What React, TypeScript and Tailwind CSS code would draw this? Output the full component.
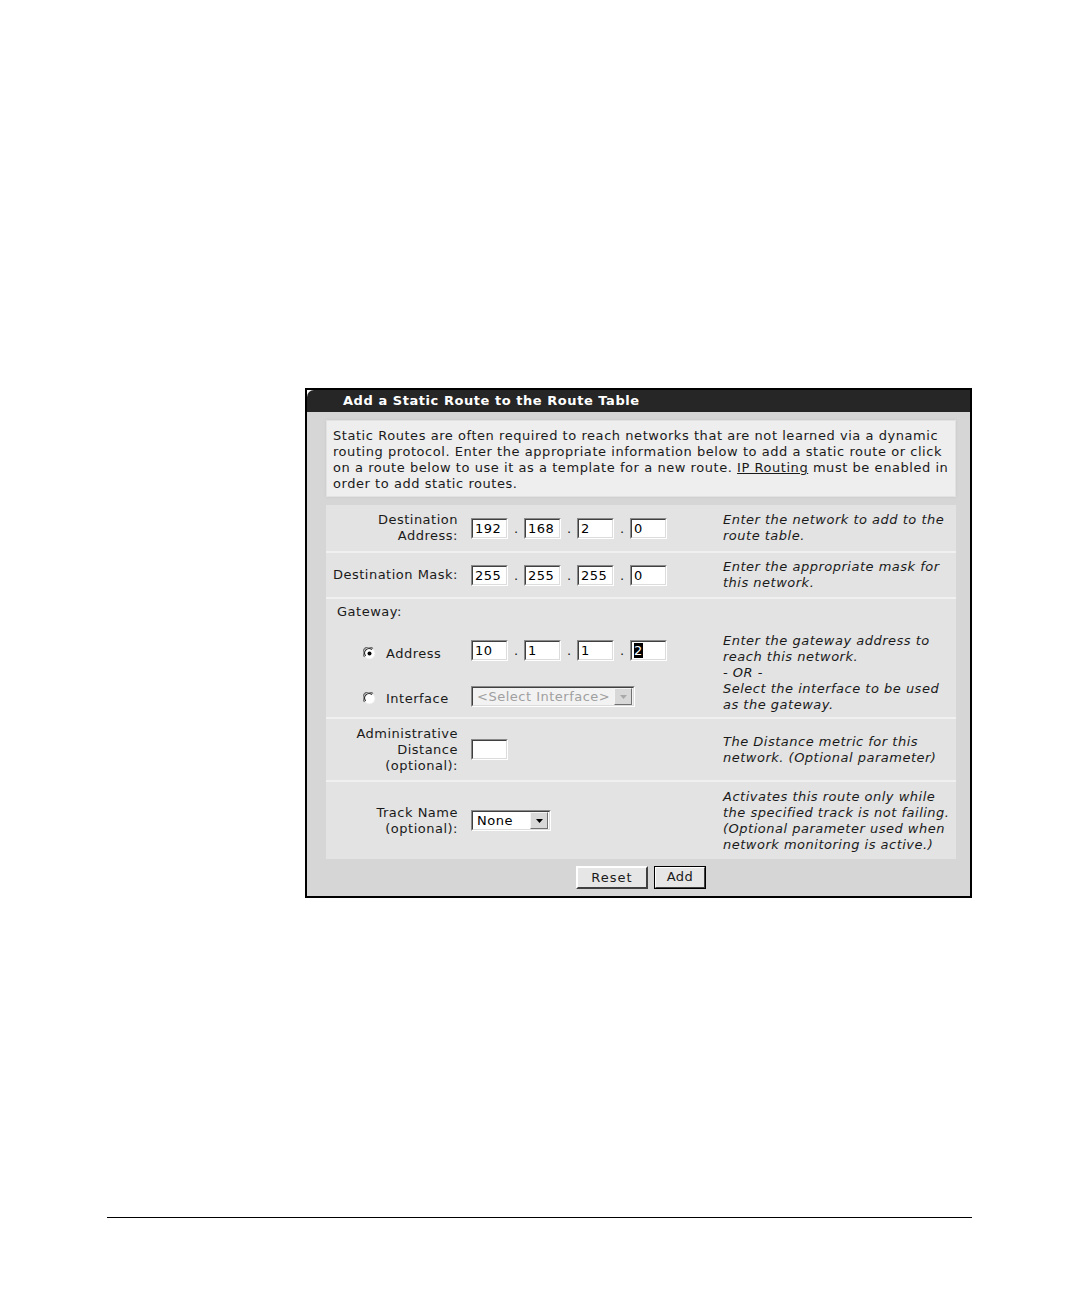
import React from "react";

function Box({ value, selected }: { value: string; selected?: boolean }) {
  return (
    <div className="h-[21px] w-[37px] border-t border-l border-t-[#8a8a8a] border-l-[#8a8a8a] border-b border-r border-b-[#ffffff] border-r-[#ffffff]">
      <div className="h-full w-full bg-white border-t border-l border-t-[#404040] border-l-[#404040] border-b border-r border-b-[#dcdcdc] border-r-[#dcdcdc] pl-[2px] text-[13px] leading-[18px] tracking-[0.5px] text-black">
        {selected ? <span className="bg-black text-white">{value}</span> : value}
      </div>
    </div>
  );
}

function Ip({ values, last }: { values: string[]; last?: boolean }) {
  return (
    <div className="flex items-center">
      {values.map((v, i) => (
        <React.Fragment key={i}>
          {i > 0 && <span className="w-[16px] text-center text-[13px] leading-[21px]">.</span>}
          <Box value={v} selected={last && i === 3} />
        </React.Fragment>
      ))}
    </div>
  );
}

function Radio({ checked }: { checked?: boolean }) {
  return (
    <svg width="13" height="13" viewBox="0 0 13 13">
      <circle cx="6.5" cy="6.5" r="5.6" fill="#ffffff" stroke="#e8e8e8" strokeWidth="1" />
      <path d="M1.6 9.9 A5.6 5.6 0 0 1 9.9 1.6" stroke="#6e6e6e" strokeWidth="1.3" fill="none" />
      <path d="M2.7 8.9 A4.4 4.4 0 0 1 8.9 2.7" stroke="#2a2a2a" strokeWidth="1.1" fill="none" />
      {checked && <circle cx="6.5" cy="6.5" r="2" fill="#000" />}
    </svg>
  );
}

function Arrow({ disabled }: { disabled?: boolean }) {
  return (
    <div className="h-[17px] w-[18px] bg-[#d8d8d8] border-t border-l border-t-[#f4f4f4] border-l-[#f4f4f4] border-b border-r border-b-[#707070] border-r-[#707070] flex items-center justify-center">
      <svg width="7" height="4" viewBox="0 0 7 4">
        <path d="M0 0 H7 L3.5 4 Z" fill={disabled ? "#a8a8a8" : "#000"} />
      </svg>
    </div>
  );
}

export default function App() {
  const desc = "italic text-[13px] leading-[16px] tracking-[0.5px] text-[#1a1a1a] pl-[8px] whitespace-nowrap";
  const label = "text-[13px] leading-[16px] tracking-[0.5px] text-[#1a1a1a] text-right pr-[7px] whitespace-nowrap";
  return (
    <div className="w-[1080px] h-[1296px] bg-white font-['DejaVu_Sans',Verdana,sans-serif] text-[#1a1a1a] pt-[388px]">
      <div className="ml-[305px] w-[667px] border-2 border-black bg-[#d6d6d6]">
        <div className="bg-white">
          <div className="h-[22px] bg-[#262626] rounded-tl-[7px] pl-[36px] text-white font-bold text-[13px] leading-[22px] tracking-[0.55px] whitespace-nowrap">
            Add a Static Route to the Route Table
          </div>
        </div>
        <div className="pl-[19px] pr-[14px] pt-[8px] pb-[3px]">
          <div className="h-[77px] bg-[#eeeeee] border border-[#e2e2e2] shadow-[0_0_3px_#c8c8c8] pl-[6px] pt-[7px] text-[13px] leading-[16px] tracking-[0.55px] whitespace-nowrap">
            Static Routes are often required to reach networks that are not learned via a dynamic
            <br />
            routing protocol. Enter the appropriate information below to add a static route or click
            <br />
            on a route below to use it as a template for a new route.{" "}
            <span className="underline">IP Routing</span> must be enabled in
            <br />
            order to add static routes.
          </div>
          <div className="mt-[8px] flex flex-col gap-[2px] bg-[#f0f0f0] w-[630px]">
            <div className="h-[46px] grid grid-cols-[139px_250px_241px] bg-[#e3e3e3] items-center">
              <div className={label}>Destination<br />Address:</div>
              <div className="pl-[6px] pt-[1px]"><Ip values={["192", "168", "2", "0"]} /></div>
              <div className={desc}>Enter the network to add to the<br />route table.</div>
            </div>
            <div className="h-[44px] grid grid-cols-[139px_250px_241px] bg-[#e3e3e3] items-center">
              <div className={label}>Destination Mask:</div>
              <div className="pl-[6px]"><Ip values={["255", "255", "255", "0"]} /></div>
              <div className={desc}>Enter the appropriate mask for<br />this network.</div>
            </div>
            <div className="h-[118px] grid grid-cols-[139px_250px_241px] bg-[#e3e3e3]">
              <div className="flex flex-col">
                <div className="pl-[11px] pt-[5px] text-[13px] leading-[16px] tracking-[0.5px]">Gateway:</div>
                <div className="mt-[23px] pl-[37px] flex items-center gap-[10px] h-[21px]">
                  <Radio checked />
                  <span className="text-[13px] leading-[16px] tracking-[0.5px]">Address</span>
                </div>
                <div className="mt-[24px] pl-[37px] flex items-center gap-[10px] h-[21px]">
                  <Radio />
                  <span className="text-[13px] leading-[16px] tracking-[0.5px]">Interface</span>
                </div>
              </div>
              <div className="flex flex-col pl-[6px] pt-[41px]">
                <Ip values={["10", "1", "1", "2"]} last />
                <div className="mt-[25px] h-[21px] w-[164px] border-t border-l border-t-[#8a8a8a] border-l-[#8a8a8a] border-b border-r border-b-[#ffffff] border-r-[#ffffff]">
                  <div className="h-full bg-[#f2f2f2] border-t border-l border-t-[#404040] border-l-[#404040] border-b border-r border-b-[#dcdcdc] border-r-[#dcdcdc] flex items-center justify-between pr-[1px]">
                    <span className="pl-[4px] text-[13px] leading-[16px] text-[#a0a0a0] tracking-[0.5px] whitespace-nowrap">&lt;Select Interface&gt;</span>
                    <Arrow disabled />
                  </div>
                </div>
              </div>
              <div className={desc + " pt-[34px]"}>
                Enter the gateway address to<br />reach this network.<br />- OR -<br />Select the interface to be used<br />as the gateway.
              </div>
            </div>
            <div className="h-[61px] grid grid-cols-[139px_250px_241px] bg-[#e3e3e3] items-center">
              <div className={label}>Administrative<br />Distance<br />(optional):</div>
              <div className="pl-[6px]"><Box value="" /></div>
              <div className={desc}>The Distance metric for this<br />network. (Optional parameter)</div>
            </div>
            <div className="h-[77px] grid grid-cols-[139px_250px_241px] bg-[#e3e3e3] items-center">
              <div className={label}>Track Name<br />(optional):</div>
              <div className="pl-[6px]">
                <div className="h-[21px] w-[80px] border-t border-l border-t-[#8a8a8a] border-l-[#8a8a8a] border-b border-r border-b-[#ffffff] border-r-[#ffffff]">
                  <div className="h-full bg-white border-t border-l border-t-[#404040] border-l-[#404040] border-b border-r border-b-[#dcdcdc] border-r-[#dcdcdc] flex items-center justify-between pr-[1px]">
                    <span className="pl-[4px] text-[13px] leading-[16px] tracking-[0.5px] text-black">None</span>
                    <Arrow />
                  </div>
                </div>
              </div>
              <div className={desc}>Activates this route only while<br />the specified track is not failing.<br />(Optional parameter used when<br />network monitoring is active.)</div>
            </div>
          </div>
          <div className="w-[630px] flex justify-center gap-[6px] pt-[7px] pb-[4px]">
            <button className="h-[23px] w-[72px] bg-[#e6e6e6] border-t-2 border-l-2 border-t-[#ffffff] border-l-[#ffffff] border-b-2 border-r-2 border-b-[#404040] border-r-[#404040] text-[13px] leading-[16px] tracking-[1px] text-[#1a1a1a]">
              Reset
            </button>
            <button className="h-[23px] w-[52px] border border-black">
              <div className="h-full w-full bg-[#e6e6e6] border-t border-l border-t-[#ffffff] border-l-[#ffffff] border-b border-r border-b-[#404040] border-r-[#404040] text-[13px] leading-[18px] tracking-[0.5px] text-[#1a1a1a]">
                Add
              </div>
            </button>
          </div>
        </div>
      </div>
      <div className="ml-[107px] w-[865px] h-px bg-black mt-[319px]"></div>
    </div>
  );
}
